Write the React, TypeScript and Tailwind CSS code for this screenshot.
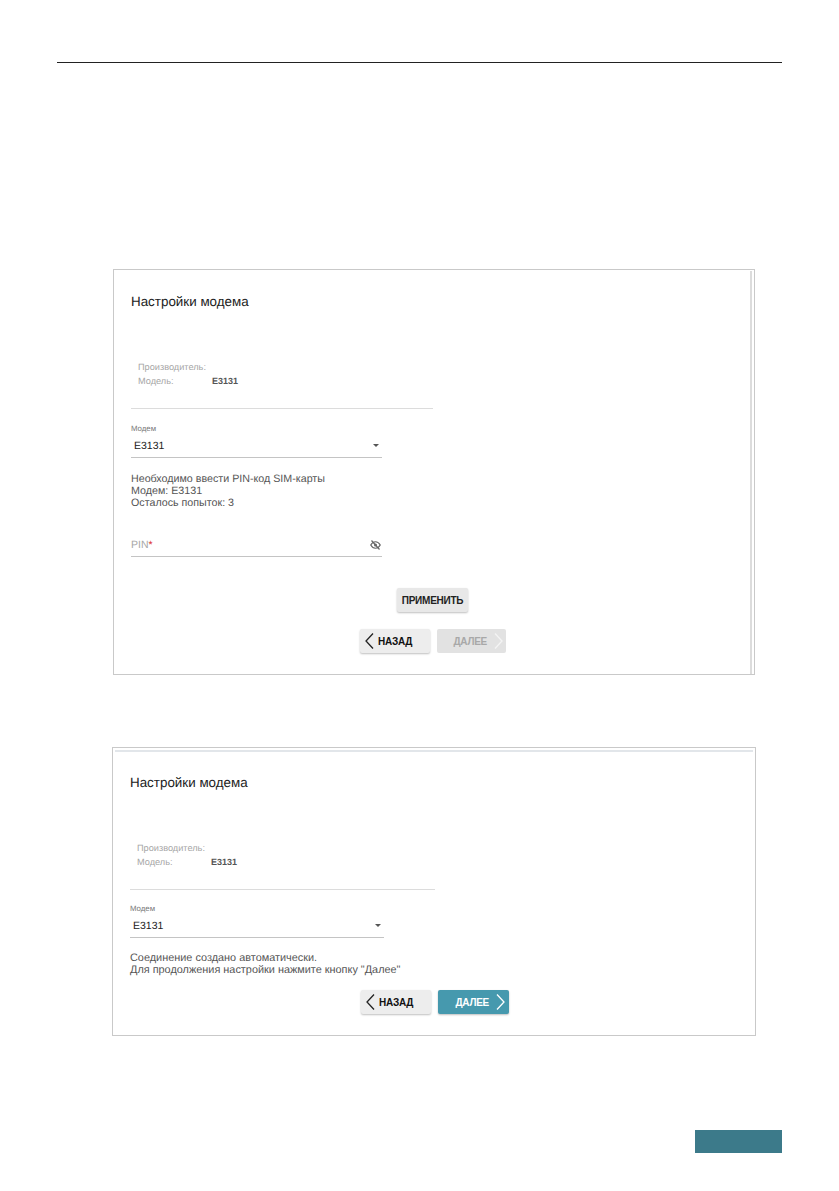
const font = "font-['Liberation_Sans',Arial,sans-serif] [text-rendering:geometricPrecision] antialiased";

function Chevron({ dir, color }: { dir: "left" | "right"; color: string }) {
  return (
    <svg width="9" height="18" viewBox="0 0 9 18" fill="none" className="shrink-0">
      <path
        d={dir === "left" ? "M8 1.5 1 9l7 7.5" : "M1 1.5 8 9l-7 7.5"}
        stroke={color}
        strokeWidth="1.3"
      />
    </svg>
  );
}

function EyeCrossed() {
  return (
    <svg width="11" height="10" viewBox="0 0 22 20" fill="none" className="mb-[2px] shrink-0">
      <path
        d="M1.500 10C4 5.500 7 3.500 11 3.500s7 2 9.500 6.500c-2.500 4.500-5.500 6.500-9.500 6.500S4 14.500 1.500 10Z"
        stroke="#666"
        strokeWidth="2.4"
      />
      <circle cx="11" cy="10" r="3" fill="#666" />
      <path d="M3 1l16 18" stroke="#666" strokeWidth="2.4" />
    </svg>
  );
}

function Back() {
  return (
    <button className="flex h-6 w-[70px] items-center rounded-[2px] bg-[#ededed] pl-[5px] text-[10px] font-bold tracking-[-0.25px] text-[#111] shadow-[0_1px_2px_rgba(0,0,0,0.25)]">
      <Chevron dir="left" color="#222" />
      <span className="ml-[4px]">НАЗАД</span>
    </button>
  );
}

function Next({ disabled }: { disabled?: boolean }) {
  return (
    <button
      className={
        disabled
          ? "flex h-6 w-[69px] items-center justify-end rounded-[2px] bg-[#e2e2e2] pr-[3px] text-[10px] font-bold tracking-[-0.25px] text-[#a8a8a8]"
          : "flex h-6 w-[71px] items-center justify-end rounded-[2px] bg-[#4699ae] pr-[4px] text-[10px] font-bold tracking-[-0.25px] text-white shadow-[0_1px_2px_rgba(0,0,0,0.25)]"
      }
    >
      <span className="mr-[7px]">ДАЛЕЕ</span>
      <Chevron dir="right" color={disabled ? "#f4f4f4" : "#ffffff"} />
    </button>
  );
}

function Info() {
  return (
    <div className="pl-[7px] text-[9.2px] leading-[14px] text-[#a6a6a6]">
      <div>Производитель:</div>
      <div className="flex">
        <span className="w-[74px]">Модель:</span>
        <span className="text-[9px] font-bold text-[#555]">E3131</span>
      </div>
    </div>
  );
}

function ModemSelect({ width }: { width: string }) {
  return (
    <div className={width}>
      <div className="text-[7.8px] leading-[8px] text-[#777]">Модем</div>
      <div className="mt-[4px] flex h-[21px] items-center justify-between border-b border-[#c4c4c4] pl-[3px] pr-[3px] text-[10.5px] text-[#222]">
        <span>E3131</span>
        <span className="mb-[4px] h-0 w-0 border-x-[3.5px] border-t-[3.5px] border-x-transparent border-t-[#555]" />
      </div>
    </div>
  );
}

export default function App() {
  return (
    <div className={`${font} h-[1191px] w-[839px] overflow-hidden bg-white pt-[62px]`}>
      <div className="mx-[57px] border-t border-[#222]" />

      {/* first screen */}
      <div className="ml-[113px] mt-[206px] h-[406px] w-[642px] border border-[#c9c9c9] pr-[2px] pt-[1px]">
        <div className="h-full border-r-2 border-[#dcdcdc] pl-[17px] pt-[23px]">
          <h2 className="text-[13.4px] leading-4 text-[#222]">Настройки модема</h2>
          <div className="mt-[50px]">
            <Info />
          </div>
          <div className="mt-[20px] w-[302px] border-t border-[#dcdcdc]" />
          <div className="mt-[16px]">
            <ModemSelect width="w-[251px]" />
          </div>
          <div className="mt-[15px] text-[10.7px] leading-[12px] text-[#555]">
            <div>Необходимо ввести PIN-код SIM-карты</div>
            <div>Модем: E3131</div>
            <div>Осталось попыток: 3</div>
          </div>
          <div className="mt-[29px] flex h-[19px] w-[251px] items-center justify-between border-b border-[#c4c4c4] pb-[2px] pr-[1px] text-[10.5px] text-[#a6a6a6]">
            <span>
              PIN<span className="text-[#d33]">*</span>
            </span>
            <EyeCrossed />
          </div>
          <button className="ml-[266px] mt-[31px] flex h-6 w-[71px] items-center justify-center rounded-[2px] bg-[#e8e8e8] text-[10px] font-bold tracking-[-0.25px] text-[#222] shadow-[0_1px_2px_rgba(0,0,0,0.25)]">
            ПРИМЕНИТЬ
          </button>
          <div className="ml-[229px] mt-[17px] flex gap-[7px]">
            <Back />
            <Next disabled />
          </div>
        </div>
      </div>

      {/* second screen */}
      <div className="ml-[112px] mt-[72px] h-[289px] w-[644px] border border-[#c9c9c9] px-[2px] pt-[2px]">
        <div className="h-full border-t-2 border-[#e2e6ea] pl-[15px] pt-[23px]">
          <h2 className="text-[13.4px] leading-4 text-[#222]">Настройки модема</h2>
          <div className="mt-[50px]">
            <Info />
          </div>
          <div className="mt-[20px] w-[305px] border-t border-[#dcdcdc]" />
          <div className="mt-[15px]">
            <ModemSelect width="w-[254px]" />
          </div>
          <div className="mt-[14px] text-[10.9px] leading-[12px] text-[#555]">
            <div>Соединение создано автоматически.</div>
            <div>Для продолжения настройки нажмите кнопку "Далее"</div>
          </div>
          <div className="ml-[231px] mt-[14px] flex gap-[7px]">
            <Back />
            <Next />
          </div>
        </div>
      </div>

      <div className="ml-[695px] mt-[94px] h-[23px] w-[87px] bg-[#3c7a8a]" />
    </div>
  );
}
